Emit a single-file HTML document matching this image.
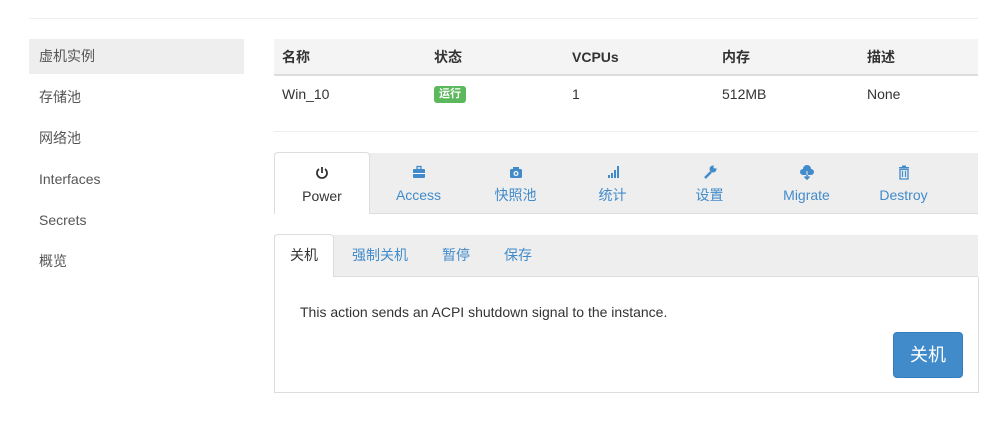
<!DOCTYPE html>
<html><head><meta charset="utf-8"><style>
body{margin:0;width:994px;height:447px;background:#fff;font-family:"Liberation Sans","Noto Sans CJK SC",sans-serif;font-size:14px;color:#333;position:relative;overflow:hidden}
.a{position:absolute;line-height:20px;height:20px}
.side div{position:absolute;left:29px;width:205px;padding-left:10px;height:35px;line-height:35px;color:#555}
.tab{position:absolute;top:153px;width:97px;height:61px;text-align:center;color:#428bca;line-height:20px}
.tab svg{display:block;margin:11px auto 5px;height:16px}
.tab span{display:block;height:20px;line-height:20px;overflow:visible}
.t2{position:absolute;top:235px;height:41px;line-height:41px;color:#428bca;text-align:center}
</style></head><body>
<div class="a" style="left:29px;top:18px;width:949px;height:1px;background:#eee"></div>
<div class="side">
<div style="top:39px;background:#eee;color:#555">虚机实例</div>
<div style="top:80px">存储池</div>
<div style="top:121px">网络池</div>
<div style="top:162px">Interfaces</div>
<div style="top:203px">Secrets</div>
<div style="top:244px">概览</div>
</div>
<div class="a" style="left:274px;top:39px;width:704px;height:35px;background:#f4f4f4;border-bottom:2px solid #ddd"></div>
<div class="a" style="top:47px;left:282px;font-weight:bold">名称</div>
<div class="a" style="top:47px;left:434px;font-weight:bold">状态</div>
<div class="a" style="top:47px;left:572px;font-weight:bold">VCPUs</div>
<div class="a" style="top:47px;left:722px;font-weight:bold">内存</div>
<div class="a" style="top:47px;left:867px;font-weight:bold">描述</div>
<div class="a" style="top:84px;left:282px">Win_10</div>
<div class="a" style="top:86px;left:434px;background:#5cb85c;color:#fff;font-size:11px;font-weight:bold;padding:0 5px;border-radius:3px;line-height:17px;height:17px">运行</div>
<div class="a" style="top:84px;left:572px">1</div>
<div class="a" style="top:84px;left:722px">512MB</div>
<div class="a" style="top:84px;left:867px">None</div>
<div class="a" style="left:274px;top:131px;width:704px;height:1px;background:#eee"></div>
<div class="a" style="left:274px;top:153px;width:704px;height:60px;background:#eee;border-bottom:1px solid #ddd"></div>
<div class="tab" style="left:274px;width:94px;background:#fff;border:1px solid #ddd;border-bottom:none;border-radius:4px 4px 0 0;color:#333;height:61px;top:152px"><svg viewBox="0 0 16 16" width="16" style="margin-top:12px"><path d="M5 4A5 5 0 1 0 11 4" fill="none" stroke="#333" stroke-width="1.8"/><path d="M8 2V8" stroke="#333" stroke-width="1.8"/></svg><span>Power</span></div>
<div class="tab" style="left:370px"><svg viewBox="0 0 16 16" width="16"><rect x="2" y="5" width="12" height="9" rx="1" fill="#428bca"/><rect x="6" y="2.5" width="4" height="3" fill="none" stroke="#428bca" stroke-width="1.3"/><rect x="2" y="9" width="12" height="1" fill="#fff"/></svg><span>Access</span></div>
<div class="tab" style="left:467px"><svg viewBox="0 0 16 16" width="16"><rect x="2" y="5" width="12" height="9" rx="1.5" fill="#428bca"/><rect x="5" y="3" width="6" height="3" fill="#428bca"/><circle cx="8" cy="9.5" r="2.5" fill="#fff"/><circle cx="8" cy="9.5" r="1.3" fill="#428bca"/></svg><span>快照池</span></div>
<div class="tab" style="left:564px"><svg viewBox="0 0 16 16" width="16"><rect x="3" y="11" width="2" height="3" fill="#428bca"/><rect x="6" y="9" width="2" height="5" fill="#428bca"/><rect x="9" y="6" width="2" height="8" fill="#428bca"/><rect x="12" y="2" width="2" height="12" fill="#428bca"/></svg><span>统计</span></div>
<div class="tab" style="left:661px"><svg viewBox="0 0 16 16" width="16"><path d="M3 14L9 8" stroke="#428bca" stroke-width="2.5"/><circle cx="11" cy="5" r="3.5" fill="#428bca"/><circle cx="13" cy="3" r="1.5" fill="#eee"/></svg><span>设置</span></div>
<div class="tab" style="left:758px"><svg viewBox="0 0 16 16" width="16"><path d="M4 11A3 3 0 0 1 4 5A4 4 0 0 1 12 5A3 3 0 0 1 12 11Z" fill="#428bca"/><path d="M8 7V15M5.5 12.5L8 15L10.5 12.5" stroke="#428bca" stroke-width="1.6" fill="none"/><path d="M8 7V11" stroke="#eee" stroke-width="1"/></svg><span>Migrate</span></div>
<div class="tab" style="left:855px"><svg viewBox="0 0 16 16" width="16"><rect x="3" y="3" width="10" height="1.5" fill="#428bca"/><rect x="6" y="1.5" width="4" height="1.5" fill="#428bca"/><path d="M4 5.5H12V15H4Z" fill="none" stroke="#428bca" stroke-width="1.3"/><path d="M6.5 7V13M9.5 7V13" stroke="#428bca" stroke-width="1.2"/></svg><span>Destroy</span></div>
<div class="a" style="left:274px;top:235px;width:704px;height:41px;background:#eee;border-bottom:1px solid #ddd"></div>
<div class="t2" style="left:274px;width:58px;background:#fff;border:1px solid #ddd;border-bottom:none;border-radius:4px 4px 0 0;color:#333;height:42px;top:234px">关机</div>
<div class="t2" style="left:340px;width:80px">强制关机</div>
<div class="t2" style="left:434px;width:44px">暂停</div>
<div class="t2" style="left:496px;width:44px">保存</div>
<div class="a" style="left:274px;top:277px;width:703px;height:115px;border:1px solid #ddd;border-top:none"></div>
<div class="a" style="left:300px;top:302px">This action sends an ACPI shutdown signal to the instance.</div>
<div class="a" style="left:893px;top:332px;width:68px;height:44px;background:#428bca;border:1px solid #357ebd;border-radius:4px;color:#fff;font-size:18px;line-height:44px;text-align:center">关机</div>
</body></html>
